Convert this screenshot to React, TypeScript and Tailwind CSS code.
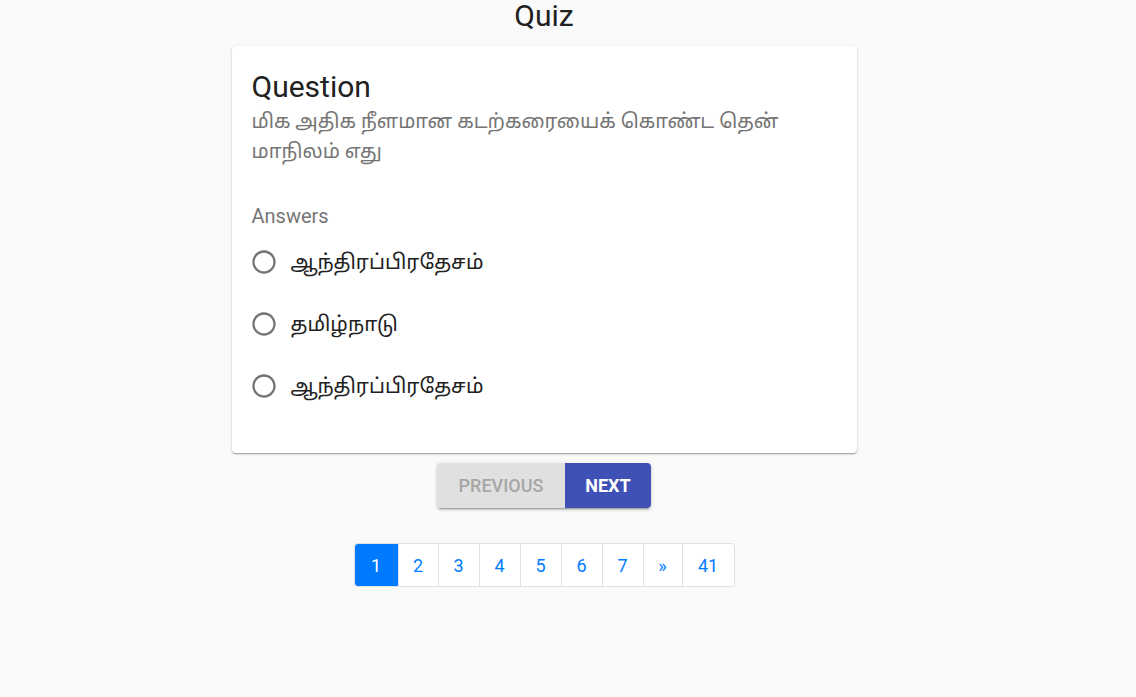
import React from "react";

const ANSWERS = ["ஆந்திரப்பிரதேசம்", "தமிழ்நாடு", "ஆந்திரப்பிரதேசம்"];
const PAGES = [
  { label: "1", w: "w-[45px]" },
  { label: "2", w: "w-[40px]" },
  { label: "3", w: "w-[41px]" },
  { label: "4", w: "w-[41px]" },
  { label: "5", w: "w-[41px]" },
  { label: "6", w: "w-[41px]" },
  { label: "7", w: "w-[41px]" },
  { label: "»", w: "w-[39px]" },
  { label: "41", w: "w-[52px]" },
];

function RadioIcon() {
  return (
    <svg viewBox="0 0 24 24" className="w-[28px] h-[28px] shrink-0" fill="#757575">
      <path d="M12 2C6.48 2 2 6.48 2 12s4.48 10 10 10 10-4.48 10-10S17.52 2 12 2zm0 18c-4.42 0-8-3.58-8-8s3.58-8 8-8 8 3.58 8 8-3.58 8-8 8z" />
    </svg>
  );
}

export default function App() {
  return (
    <main
      className="min-h-[697px] bg-[#fafafa] text-[#212121]"
      style={{ fontFamily: "Roboto, 'Noto Sans', 'Noto Sans Tamil', sans-serif" }}
    >
      <div className="w-[1088px] flex flex-col items-center">
        {/* Title */}
        <h1 className="text-[30px] leading-[32px] font-normal">Quiz</h1>

        {/* Card */}
        <div className="mt-[14px] w-[625px] bg-white rounded-[4px] shadow-[0_1px_3px_rgba(0,0,0,0.2),0_1px_1px_rgba(0,0,0,0.14),0_2px_1px_-1px_rgba(0,0,0,0.12)] px-[20px] pt-[22px] pb-[36px]">
          <h2 className="text-[30px] leading-[38px]">Question</h2>
          <p className="text-[20px] leading-[30px] text-[#757575] pr-[30px]">
            மிக அதிக நீளமான கடற்கரையைக் கொண்ட தென் மாநிலம் எது
          </p>

          <div className="mt-[38px] text-[20px] leading-[24px] text-[#757575]">Answers</div>

          <div className="mt-[3px] flex flex-col">
            {ANSWERS.map((a, i) => (
              <label key={i} className="h-[62px] flex items-center gap-[13px]">
                <span className="-ml-[2px]">
                  <RadioIcon />
                </span>
                <span className="text-[20.5px] text-[#212121]">{a}</span>
              </label>
            ))}
          </div>
        </div>

        {/* Buttons */}
        <div className="mt-[10px] flex rounded-[4px] overflow-hidden shadow-[0_3px_1px_-2px_rgba(0,0,0,0.2),0_2px_2px_0_rgba(0,0,0,0.14),0_1px_5px_0_rgba(0,0,0,0.12)]">
          <button className="w-[128px] h-[45px] bg-[#e0e0e0] text-[#a6a6a6] text-[18px] font-medium uppercase">
            Previous
          </button>
          <button className="w-[86px] h-[45px] bg-[#3f51b5] text-white text-[18px] font-bold uppercase">
            Next
          </button>
        </div>

        {/* Pagination */}
        <ul className="mt-[35px] flex">
          {PAGES.map((p, i) => {
            const active = i === 0;
            return (
              <li
                key={p.label}
                className={`${p.w} h-[44px] flex items-center justify-center text-[18px] border border-[#dee2e6] border-l-0 first:border-l first:rounded-l-[4px] last:rounded-r-[4px] ${
                  active ? "bg-[#007bff] border-[#007bff] text-white" : "bg-white text-[#007bff]"
                }`}
              >
                {p.label}
              </li>
            );
          })}
        </ul>
      </div>
    </main>
  );
}
